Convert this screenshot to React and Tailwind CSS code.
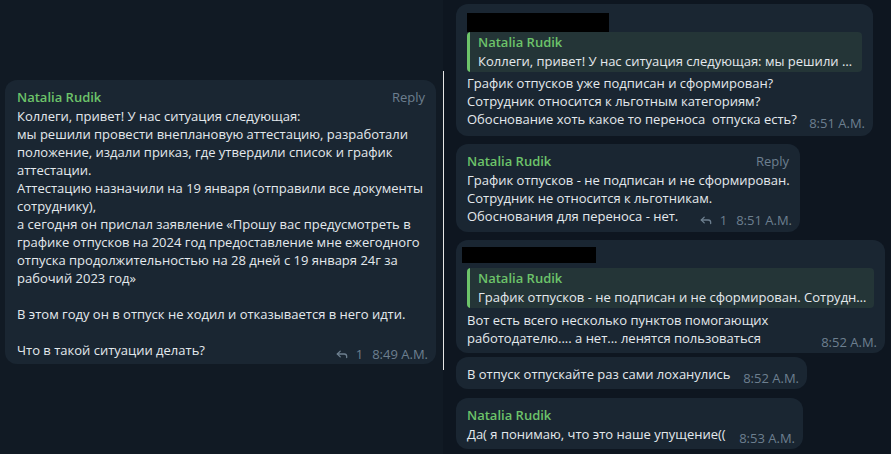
import React from 'react';
import { Reply } from 'lucide-react';

const NAME = 'Natalia Rudik';

const Meta = ({ time, replies }) => (
  <span className="float-right flex items-center text-[13px] leading-[18px] text-[#6d7f8f] whitespace-nowrap translate-y-[4px] pl-3 -mr-[3px]">
    {replies && (
      <span className="inline-flex items-center gap-[7px] mr-[9px]">
        <Reply className="w-[14px] h-[14px]" strokeWidth={2.2} />
        {replies}
      </span>
    )}
    <span>{time}</span>
  </span>
);

const Quote = ({ text }) => (
  <div className="flex rounded-[4px] overflow-hidden bg-[#243537] h-[40px]">
    <div className="w-[3px] bg-[#6dc36a] shrink-0" />
    <div className="pl-[8px] pr-[5px] min-w-0 leading-[19px] pt-[1px]">
      <div className="text-[#6dc36a] font-semibold">{NAME}</div>
      <div className="truncate text-[#e4e9ed]">{text}</div>
    </div>
  </div>
);

const Header = ({ reply = true }) => (
  <div className="flex justify-between leading-[19px]">
    <span className="text-[#6dc36a] font-semibold">{NAME}</span>
    {reply && <span className="text-[#6d7f8f]">Reply</span>}
  </div>
);

const Body = ({ lines, time, replies }) => (
  <div className="leading-[18px] whitespace-pre">
    {lines.map((l, i) => (
      <div key={i} className="h-[18px]">
        {i === lines.length - 1 && <Meta time={time} replies={replies} />}
        {l}
      </div>
    ))}
  </div>
);

const Bubble = ({ w, className = '', children }) => (
  <div className={`bg-[#1a2632] rounded-[12px] pl-[11px] pr-[11px] ${className}`} style={{ width: w }}>
    {children}
  </div>
);

export default function App() {
  return (
    <div
      className="flex w-[891px] h-[454px] overflow-hidden text-[13px] text-[#e4e9ed] bg-[#0e1620]"
      style={{ fontFamily: '"Open Sans", "Noto Sans", sans-serif' }}
    >
      <div className="w-[443px] bg-[#111a24] pt-[80px] pl-[5px] shrink-0">
        <Bubble w={431} className="pt-[8px] pb-[5px] !pl-[12px]">
          <Header />
          <Body
            time="8:49 A.M."
            replies="1"
            lines={[
              'Коллеги, привет! У нас ситуация следующая:',
              'мы решили провести внеплановую аттестацию, разработали',
              'положение, издали приказ, где утвердили список и график',
              'аттестации.',
              'Аттестацию назначили на 19 января (отправили все документы',
              'сотруднику),',
              'а сегодня он прислал заявление «Прошу вас предусмотреть в',
              'графике отпусков на 2024 год предоставление мне ежегодного',
              'отпуска продолжительностью на 28 дней с 19 января 24г за',
              'рабочий 2023 год»',
              ' ',
              'В этом году он в отпуск не ходил и отказывается в него идти.',
              ' ',
              'Что в такой ситуации делать?',
            ]}
          />
        </Bubble>
      </div>

      <div className="w-px bg-[#e6e6e6] mt-[71px] h-[299px] shrink-0" />

      <div className="flex flex-col pl-[12px] pt-[4px]">
        <Bubble w={417} className="pt-[9px] pb-[8px]">
          <div className="h-[19px] w-[142px] bg-black" />
          <Quote text="Коллеги, привет! У нас ситуация следующая: мы решили …" />
          <div className="mt-[2px]">
            <Body
              time="8:51 A.M."
              lines={[
                'График отпусков уже подписан и сформирован?',
                'Сотрудник относится к льготным категориям?',
                'Обоснование хоть какое то переноса  отпуска есть?',
              ]}
            />
          </div>
        </Bubble>

        <Bubble w={344} className="mt-[8px] pt-[8px] pb-[7px]">
          <Header />
          <Body
            time="8:51 A.M."
            replies="1"
            lines={[
              'График отпусков - не подписан и не сформирован.',
              'Сотрудник не относится к льготникам.',
              'Обоснования для переноса - нет.',
            ]}
          />
        </Bubble>

        <Bubble w={429} className="mt-[8px] pt-[7px] pb-[6px]">
          <div className="h-[16px] w-[134px] bg-black -ml-[5px] mb-[5px]" />
          <Quote text="График отпусков - не подписан и не сформирован. Сотрудн…" />
          <div className="mt-[3px]">
            <Body
              time="8:52 A.M."
              lines={['Вот есть всего несколько пунктов помогающих', 'работодателю.... а нет... ленятся пользоваться']}
            />
          </div>
        </Bubble>

        <Bubble w={351} className="mt-[4px] pt-[8px] pb-[6px]">
          <Body time="8:52 A.M." lines={['В отпуск отпускайте раз сами лоханулись']} />
        </Bubble>

        <Bubble w={347} className="mt-[9px] pt-[8px] pb-[6px]">
          <Header reply={false} />
          <Body time="8:53 A.M." lines={['Да( я понимаю, что это наше упущение((']} />
        </Bubble>
      </div>
    </div>
  );
}
